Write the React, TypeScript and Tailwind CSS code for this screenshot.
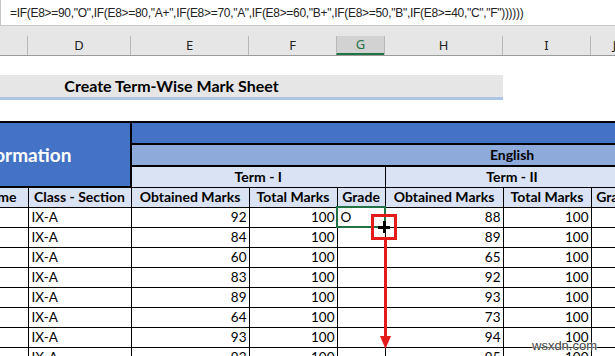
const formula = '=IF(E8>=90,"O",IF(E8>=80,"A+",IF(E8>=70,"A",IF(E8>=60,"B+",IF(E8>=50,"B",IF(E8>=40,"C","F"))))))';

const letters = [
  { l: "D", w: "w-[103px]" },
  { l: "E", w: "w-[118px]" },
  { l: "F", w: "w-[88px]" },
  { l: "G", w: "w-[48px]", active: true },
  { l: "H", w: "w-[118px]" },
  { l: "I", w: "w-[88px]" },
  { l: "J", w: "w-[48px]" },
];

const widths = [127, 60, 103, 118, 88, 48, 118, 88, 48, 118, 88, 48];

const term1 = [92, 84, 60, 83, 89, 64, 93, 92];
const term2 = [88, 89, 65, 92, 93, 73, 94, 95];

const head = "border border-black font-bold text-center text-[14px] leading-[16px] text-black bg-[#dae3f3] whitespace-nowrap overflow-hidden p-0";
const cell = "border border-black h-[20px] p-0 text-[13.5px] leading-[16px] text-black whitespace-nowrap overflow-hidden";

export default function App() {
  return (
    <div className="relative w-[615px] h-[356px] overflow-hidden bg-white">
      {/* formula bar */}
      <div className="h-[26px] border-b border-l border-[#c6c6c6] flex items-center pl-[9px] text-[12px] tracking-[-0.3px] text-[#222] font-['Liberation_Sans',sans-serif] whitespace-nowrap">
        {formula}
      </div>

      {/* column letters */}
      <div className="h-[30px] bg-[#e6e6e6] flex items-end">
        <div className="flex h-[20px] w-full border-b border-[#9b9b9b] font-['Noto_Sans',sans-serif] text-[13px] text-[#222]">
          <div className="w-[27px] shrink-0" />
          {letters.map((c) => (
            <div
              key={c.l}
              className={`${c.w} shrink-0 flex items-center justify-center border-l border-[#b8b8b8] ${
                c.active ? "bg-[#d2d2d2] text-[#217346] border-b-2 border-b-[#217346]" : ""
              }`}
            >
              {c.l}
            </div>
          ))}
        </div>
      </div>

      {/* title */}
      <div className="ml-[-160px] mt-[19px] w-[663px] h-[25px] bg-[#e7e6e6] border-b-[3px] border-[#acc4e8] flex items-center justify-center font-['Lato',sans-serif] font-bold text-[16px] text-black">
        Create Term-Wise Mark Sheet
      </div>

      {/* sheet */}
      <div className="ml-[-160px] mt-[21px] font-['Lato',sans-serif]">
        <table className="table-fixed border-collapse w-[1052px]">
          <colgroup>
            {widths.map((w, i) => (
              <col key={i} style={{ width: w }} />
            ))}
          </colgroup>
          <tbody>
            <tr>
              <td
                rowSpan={3}
                colSpan={3}
                className="border-2 border-black bg-[#4472c4] text-white font-bold text-[19px] leading-[22px] text-center whitespace-nowrap p-0"
              >
                Student Information
              </td>
              <td colSpan={9} className="border-2 border-black bg-[#4472c4] h-[22px] p-0" />
            </tr>
            <tr>
              <td colSpan={9} className="border-2 border-black bg-[#8eaadb] h-[22px] p-0 text-center font-bold text-[14px] leading-[16px] text-black">
                English
              </td>
            </tr>
            <tr>
              <td colSpan={3} className={`${head} h-[21px]`}>Term - I</td>
              <td colSpan={3} className={`${head} h-[21px]`}>Term - II</td>
              <td colSpan={3} className={`${head} h-[21px]`}>Term - III</td>
            </tr>
            <tr>
              {["Student ID", "Name", "Class - Section", "Obtained Marks", "Total Marks", "Grade", "Obtained Marks", "Total Marks", "Grade", "Obtained Marks", "Total Marks", "Grade"].map(
                (t, i) => (
                  <td key={i} className={`${head} h-[20px]`}>
                    {t}
                  </td>
                )
              )}
            </tr>
            {term1.map((m, r) => (
              <tr key={r}>
                <td className={cell} />
                <td className={cell} />
                <td className={`${cell} pl-[3px]`}>IX-A</td>
                <td className={`${cell} text-right pr-[2px]`}>{m}</td>
                <td className={`${cell} text-right pr-[2px]`}>100</td>
                <td
                  className={`${cell} pl-[3px] ${
                    r === 0 ? "outline-2 outline-[#217346] -outline-offset-1" : ""
                  }`}
                >
                  {r === 0 ? "O" : ""}
                </td>
                <td className={`${cell} text-right pr-[2px]`}>{term2[r]}</td>
                <td className={`${cell} text-right pr-[2px]`}>100</td>
                <td className={cell} />
                <td className={cell} />
                <td className={cell} />
                <td className={cell} />
              </tr>
            ))}
          </tbody>
        </table>
      </div>

      {/* fill handle annotation */}
      <div className="absolute left-[371px] top-[214px] w-[26px] h-[26px] border-[3px] border-[#e41b1b]" />
      <div className="absolute left-[378px] top-[226px] w-[12px] h-[3px] bg-black" />
      <div className="absolute left-[383px] top-[221px] w-[3px] h-[12px] bg-black" />
      <div className="absolute left-[384px] top-[240px] w-[3px] h-[98px] bg-[#e41b1b]" />
      <svg className="absolute left-[380px] top-[336px]" width="11" height="13" viewBox="0 0 11 13">
        <polygon points="0,0 11,0 5.5,13" fill="#e41b1b" />
      </svg>

      {/* watermark */}
      <div className="absolute left-[532px] top-[336px] text-[13px] text-[#444] font-['Liberation_Sans',sans-serif] [text-shadow:0_0_2px_#fff,0_0_2px_#fff]">
        wsxdn.com
      </div>
    </div>
  );
}
